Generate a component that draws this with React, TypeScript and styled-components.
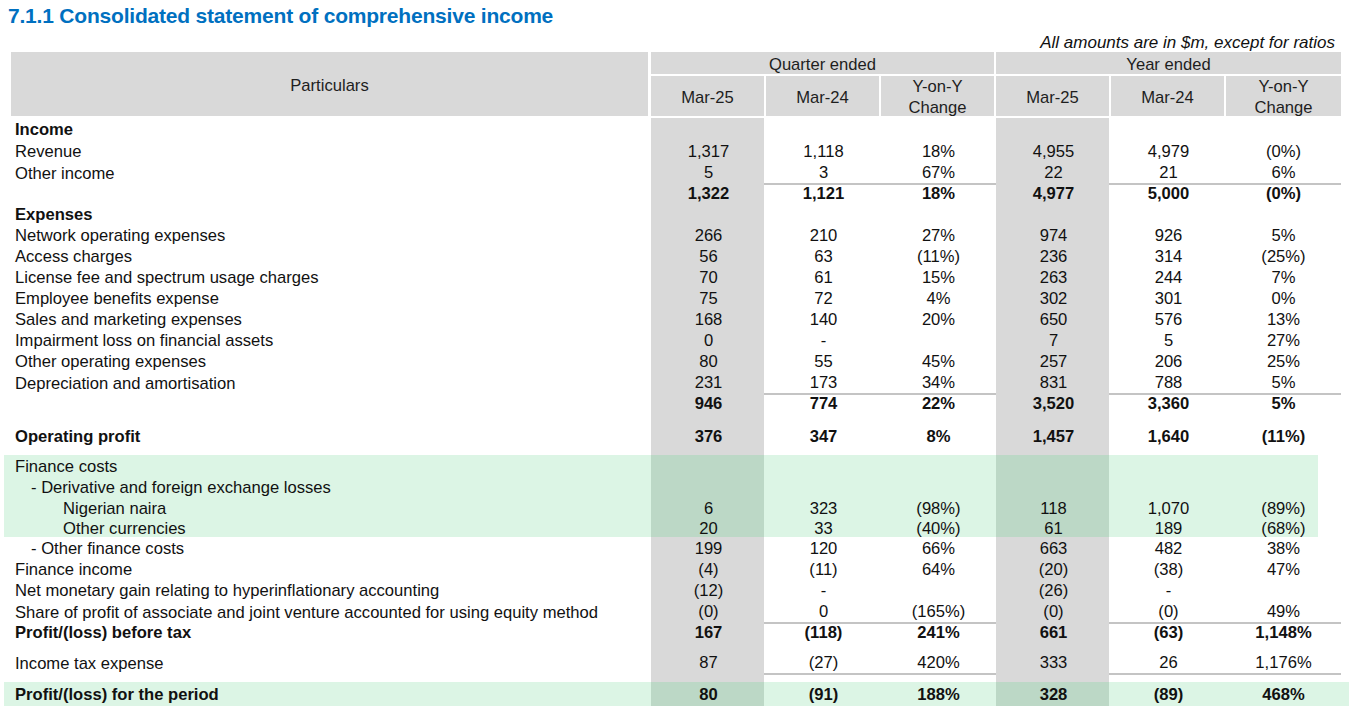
import React from "react";
import styled, { createGlobalStyle } from "styled-components";

const Global = createGlobalStyle`
  html, body { margin: 0; padding: 0; background: #ffffff; }
  body { font-family: "Liberation Sans", Arial, sans-serif; color: #111111; }
`;

const GREY = "#d9d9d9";
const GREEN = "#dcf5e5";
const DEEP_GREEN = "#bcd8c6";
const COLS = "647px repeat(6, 115px)";

const Page = styled.div`
  width: 1349px;
  height: 708px;
  overflow: hidden;
  padding-left: 4px;
  box-sizing: border-box;
`;

const Title = styled.h1`
  margin: 0;
  padding: 3px 0 0 4px;
  font-size: 21px;
  line-height: 25px;
  font-weight: 700;
  color: #0070c0;
  letter-spacing: -0.2px;
`;

const Note = styled.div`
  margin-top: 6px;
  padding-right: 14px;
  text-align: right;
  font-style: italic;
  font-size: 17px;
  line-height: 18px;
  color: #111;
`;

const Head = styled.div`
  display: grid;
  grid-template-columns: ${COLS};
  grid-template-rows: 22px 40px;
  row-gap: 2px;
  margin-bottom: 2px;
  color: #1e1e1e;
  font-size: 16.6px;
`;

const HeadCell = styled.div<{ $col: string; $row: string; $gapRight?: number; $gapLeft?: number }>`
  grid-column: ${(p) => p.$col};
  grid-row: ${(p) => p.$row};
  margin-right: ${(p) => p.$gapRight ?? 2}px;
  margin-left: ${(p) => p.$gapLeft ?? 0}px;
  background: ${GREY};
  display: flex;
  align-items: center;
  justify-content: center;
  text-align: center;
  line-height: 21px;
  padding-top: 2px;
  box-sizing: border-box;
`;

const Row = styled.div<{ $h: number; $band?: "mid" | "full" }>`
  display: grid;
  grid-template-columns: ${COLS};
  width: 1345px;
  height: ${(p) => p.$h}px;
  font-size: 16.6px;
  background: ${(p) =>
    p.$band === "mid"
      ? `linear-gradient(to right, ${GREEN} 1314px, transparent 1314px)`
      : p.$band === "full"
      ? GREEN
      : "transparent"};
`;

const Label = styled.div<{ $indent: number; $bold?: boolean }>`
  padding-left: ${(p) => 11 + p.$indent}px;
  padding-top: 2px;
  display: flex;
  align-items: center;
  white-space: nowrap;
  font-weight: ${(p) => (p.$bold ? 700 : 400)};
`;

const Value = styled.div<{ $shade?: string; $bold?: boolean; $rule?: boolean }>`
  display: flex;
  align-items: center;
  justify-content: center;
  box-sizing: border-box;
  padding-top: 2px;
  font-weight: ${(p) => (p.$bold ? 700 : 400)};
  background: ${(p) =>
    p.$shade ? `linear-gradient(to right, ${p.$shade} calc(100% - 2px), transparent 0)` : "transparent"};
  border-bottom: ${(p) => (p.$rule ? "2px solid #c4c4c4" : "0")};
`;

type Line = {
  label?: string;
  indent?: number;
  bold?: boolean;
  values?: string[];
  h: number;
  rule?: boolean;
  band?: "mid" | "full";
};

const lines: Line[] = [
  { label: "Income", bold: true, h: 22 },
  { label: "Revenue", values: ["1,317", "1,118", "18%", "4,955", "4,979", "(0%)"], h: 21 },
  { label: "Other income", values: ["5", "3", "67%", "22", "21", "6%"], h: 21, rule: true },
  { bold: true, values: ["1,322", "1,121", "18%", "4,977", "5,000", "(0%)"], h: 21 },
  { label: "Expenses", bold: true, h: 21 },
  { label: "Network operating expenses", values: ["266", "210", "27%", "974", "926", "5%"], h: 21 },
  { label: "Access charges", values: ["56", "63", "(11%)", "236", "314", "(25%)"], h: 21 },
  { label: "License fee and spectrum usage charges", values: ["70", "61", "15%", "263", "244", "7%"], h: 21 },
  { label: "Employee benefits expense", values: ["75", "72", "4%", "302", "301", "0%"], h: 21 },
  { label: "Sales and marketing expenses", values: ["168", "140", "20%", "650", "576", "13%"], h: 21 },
  { label: "Impairment loss on financial assets", values: ["0", "-", "", "7", "5", "27%"], h: 21 },
  { label: "Other operating expenses", values: ["80", "55", "45%", "257", "206", "25%"], h: 21 },
  { label: "Depreciation and amortisation", values: ["231", "173", "34%", "831", "788", "5%"], h: 21, rule: true },
  { bold: true, values: ["946", "774", "22%", "3,520", "3,360", "5%"], h: 21 },
  { h: 12 },
  { label: "Operating profit", bold: true, values: ["376", "347", "8%", "1,457", "1,640", "(11%)"], h: 21 },
  { h: 9 },
  { label: "Finance costs", h: 21, band: "mid" },
  { label: "- Derivative and foreign exchange losses", indent: 16, h: 21, band: "mid" },
  { label: "Nigerian naira", indent: 48, values: ["6", "323", "(98%)", "118", "1,070", "(89%)"], h: 20, band: "mid" },
  { label: "Other currencies", indent: 48, values: ["20", "33", "(40%)", "61", "189", "(68%)"], h: 20, band: "mid" },
  { label: "- Other finance costs", indent: 16, values: ["199", "120", "66%", "663", "482", "38%"], h: 21 },
  { label: "Finance income", values: ["(4)", "(11)", "64%", "(20)", "(38)", "47%"], h: 21 },
  { label: "Net monetary gain relating to hyperinflationary accounting", values: ["(12)", "-", "", "(26)", "-", ""], h: 21 },
  { label: "Share of profit of associate and joint venture accounted for using equity method", values: ["(0)", "0", "(165%)", "(0)", "(0)", "49%"], h: 21, rule: true },
  { label: "Profit/(loss) before tax", bold: true, values: ["167", "(118)", "241%", "661", "(63)", "1,148%"], h: 21 },
  { h: 9 },
  { label: "Income tax expense", values: ["87", "(27)", "420%", "333", "26", "1,176%"], h: 21, rule: true },
  { h: 10 },
  { label: "Profit/(loss) for the period", bold: true, values: ["80", "(91)", "188%", "328", "(89)", "468%"], h: 24, band: "full" },
];

const shadeFor = (i: number, band?: "mid" | "full") => {
  if (i !== 0 && i !== 3) return undefined;
  return band ? DEEP_GREEN : GREY;
};

export default function App() {
  return (
    <Page>
      <Global />
      <Title>7.1.1 Consolidated statement of comprehensive income</Title>
      <Note>All amounts are in $m, except for ratios</Note>
      <Head>
        <HeadCell $col="1" $row="1 / span 2" $gapLeft={7} $gapRight={3}>
          Particulars
        </HeadCell>
        <HeadCell $col="2 / span 3" $row="1">Quarter ended</HeadCell>
        <HeadCell $col="5 / span 3" $row="1" $gapRight={0}>Year ended</HeadCell>
        <HeadCell $col="2" $row="2">Mar-25</HeadCell>
        <HeadCell $col="3" $row="2">Mar-24</HeadCell>
        <HeadCell $col="4" $row="2">Y-on-Y<br />Change</HeadCell>
        <HeadCell $col="5" $row="2">Mar-25</HeadCell>
        <HeadCell $col="6" $row="2">Mar-24</HeadCell>
        <HeadCell $col="7" $row="2" $gapRight={0}>Y-on-Y<br />Change</HeadCell>
      </Head>
      {lines.map((l, r) => (
        <Row key={r} $h={l.h} $band={l.band}>
          <Label $indent={l.indent ?? 0} $bold={l.bold}>{l.label ?? ""}</Label>
          {Array.from({ length: 6 }).map((_, i) => (
            <Value key={i} $shade={shadeFor(i, l.band)} $bold={l.bold} $rule={l.rule}>
              {l.values ? l.values[i] : ""}
            </Value>
          ))}
        </Row>
      ))}
    </Page>
  );
}
